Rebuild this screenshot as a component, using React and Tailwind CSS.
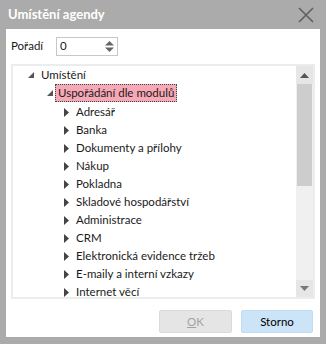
import React from 'react';

const font = { fontFamily: 'Lato, "Noto Sans", sans-serif' };

// small filled "expanded" triangle (points down-right)
const Expanded = () => (
  <svg width="6" height="6" viewBox="0 0 6 6" className="shrink-0">
    <polygon points="6,0 6,6 0,6" fill="#555" />
  </svg>
);

// collapsed triangle (points right)
const Collapsed = () => (
  <svg width="5" height="9" viewBox="0 0 5 9" className="shrink-0">
    <polygon points="0,0 5,4.5 0,9" fill="#444" />
  </svg>
);

const modules = [
  'Adresář',
  'Banka',
  'Dokumenty a přílohy',
  'Nákup',
  'Pokladna',
  'Skladové hospodářství',
  'Administrace',
  'CRM',
  'Elektronická evidence tržeb',
  'E-maily a interní vzkazy',
  'Internet věcí',
];

const App = () => {
  return (
    <div
      className="w-[326px] h-[344px] bg-[#ababab] flex flex-col text-[11.5px] text-[#1a1a1a] overflow-hidden"
      style={font}
    >
      {/* Title bar */}
      <div className="h-[29px] flex items-center justify-between pl-[8px] pr-[12px] shrink-0">
        <span className="text-white font-bold text-[13px]">Umístění agendy</span>
        <svg width="16" height="16" viewBox="0 0 16 16">
          <path d="M1 1 L15 15 M15 1 L1 15" stroke="#5f5f5f" strokeWidth="1.6" />
        </svg>
      </div>

      {/* Body */}
      <div className="flex-1 mx-[6px] mb-[7px] bg-white flex flex-col">
        {/* Pořadí */}
        <div className="flex items-center h-[18px] mt-[8px] pl-[5px]">
          <span className="w-[45px]">Pořadí</span>
          <div className="w-[62px] h-[19px] border border-[#c8c8c8] flex items-center justify-between pl-[3px] pr-[3px]">
            <span>0</span>
            <svg width="9" height="13" viewBox="0 0 9 13">
              <polygon points="4.5,1 9,5.5 0,5.5" fill="#666" />
              <polygon points="0,7.5 9,7.5 4.5,12" fill="#666" />
            </svg>
          </div>
        </div>

        {/* Tree */}
        <div className="mt-[9px] ml-[5px] w-[304px] h-[235px] border-2 border-[#ececec] flex">
          <div className="flex-1 overflow-hidden">
            <div className="h-[18px] flex items-center pl-[15px] gap-[7px]">
              <Expanded />
              <span>Umístění</span>
            </div>
            <div className="h-[18px] flex items-center pl-[34px] gap-[2px]">
              <Expanded />
              <span className="px-[2px] h-[18px] flex items-center bg-[#f7a8b6] border border-dotted border-[#2f4f3f]">
                Uspořádání dle modulů
              </span>
            </div>
            <div className="pt-[1px]">
              {modules.map((m) => (
                <div key={m} className="h-[18px] flex items-center pl-[51px] gap-[7px]">
                  <Collapsed />
                  <span className="whitespace-nowrap leading-[14px]">{m}</span>
                </div>
              ))}
            </div>
          </div>

          {/* Scrollbar */}
          <div className="w-[17px] bg-[#f0f0f0] flex flex-col">
            <div className="h-[18px] bg-[#e6e6e6] flex items-center justify-center">
              <svg width="9" height="5" viewBox="0 0 9 5">
                <polygon points="4.5,0 9,5 0,5" fill="#555" />
              </svg>
            </div>
            <div className="mx-[1px] h-[102px] bg-[#cdcdcd]" />
            <div className="flex-1" />
            <div className="h-[17px] bg-[#e6e6e6] flex items-center justify-center">
              <svg width="9" height="5" viewBox="0 0 9 5">
                <polygon points="0,0 9,0 4.5,5" fill="#777" />
              </svg>
            </div>
          </div>
        </div>

        {/* Buttons */}
        <div className="flex justify-end gap-[9px] pr-[7px] mt-[11px]">
          <div className="w-[73px] h-[23px] bg-[#e5e5e5] border border-[#dadada] rounded-[2px] flex items-center justify-center text-[#a3a3a3]">
            <span><span className="underline">O</span>K</span>
          </div>
          <div className="w-[72px] h-[23px] bg-[#cce4f7] border border-[#c3dcf0] rounded-[2px] flex items-center justify-center text-black">
            Storno
          </div>
        </div>
      </div>
    </div>
  );
};

export default App;
